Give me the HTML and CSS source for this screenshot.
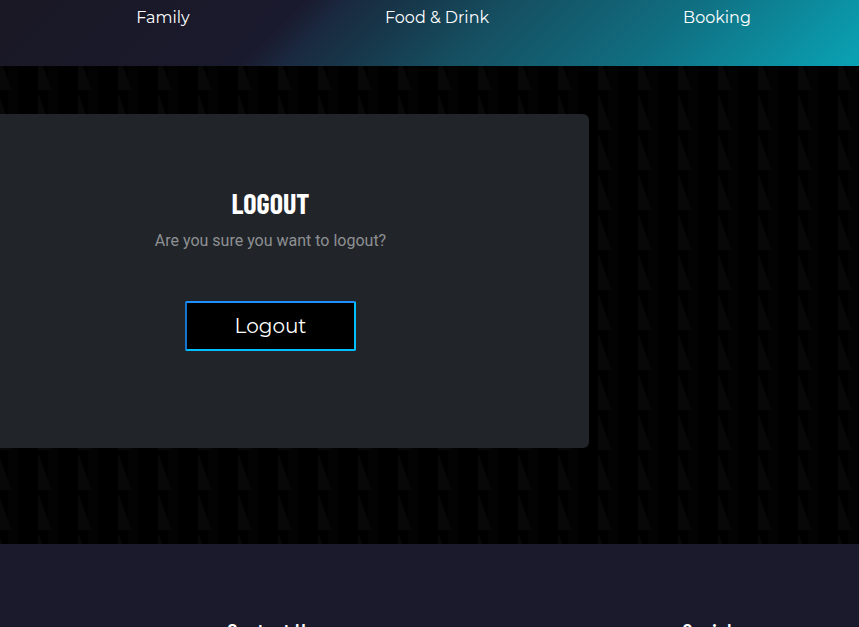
FILE: index.html
```html
<!DOCTYPE html>
<html lang="en">
<head>
<meta charset="utf-8">
<title>Logout</title>
<link rel="stylesheet" href="styles.css">
</head>
<body>
<nav class="nav">
  <a>Family</a>
  <a>Food &amp; Drink</a>
  <a>Booking</a>
</nav>
<main class="main">
  <section class="card">
    <h1>LOGOUT</h1>
    <p>Are you sure you want to logout?</p>
    <button class="button">Logout</button>
  </section>
</main>
<footer class="footer">
  <h2>Contact Us</h2>
  <h2>Socials</h2>
</footer>
</body>
</html>
```
FILE: styles.css
```css
* { box-sizing: border-box; }
body {
  margin: 0;
  height: 627px;
  overflow: hidden;
  background: #000;
  color: #fff;
  font-family: Roboto, "Liberation Sans", sans-serif;
}
.nav {
  height: 66px;
  display: grid;
  grid-template-columns: 326px 222px 338px;
  overflow: hidden;
  font: 16px/24px Montserrat, Inter, sans-serif;
  padding-top: 6px;
  background: linear-gradient(135deg, #1a1824 0%, #1a1a2e 33%, #1a2a40 38%, #173649 44%, #154e60 55%, #106e80 75%, #0a9daf 97%, #0aa0b2 100%);
}
.nav a { text-align: center; }
.main {
  height: 478px;
  padding-top: 48px;
  background-color: #000;
  background-image:
    url("data:image/svg+xml,%3Csvg xmlns='http://www.w3.org/2000/svg' width='40' height='40'%3E%3Cpath d='M0 0L13.5 37H0Z' fill='%23080808'/%3E%3C/svg%3E"),
    linear-gradient(90deg, transparent 10px, #030303 10px 20px, transparent 20px);
  background-size: 40px 40px;
  background-position: -2px 27px;
}
.card {
  width: 589px;
  height: 334px;
  border-radius: 0 6px 6px 0;
  background: #212529;
  display: flex;
  flex-direction: column;
  align-items: center;
  padding: 72px 48px 0 0;
}
h1, h2, p { margin: 0; white-space: nowrap; }
h1 { font: 700 28px/34px "Barlow Condensed", "Roboto Condensed", Roboto, sans-serif; }
p { font-size: 16px; line-height: 24px; color: #8e9093; margin-top: 9px; }
.button {
  width: 171px;
  height: 50px;
  margin-top: 48px;
  padding: 0;
  border: 2px solid;
  border-color: #1e90ff #00bfff #00bfff #1474cf;
  border-radius: 2px;
  background: #000;
  color: #fff;
  font: 20px/46px Montserrat, Inter, sans-serif;
}
.footer {
  height: 83px;
  overflow: hidden;
  display: grid;
  grid-template-columns: 542px 339px;
  padding-top: 75px;
  background: #1a1a2c;
}
h2 { font: 500 23.5px/24px "Barlow Condensed", "Roboto Condensed", Roboto, sans-serif; text-align: center; }
```
